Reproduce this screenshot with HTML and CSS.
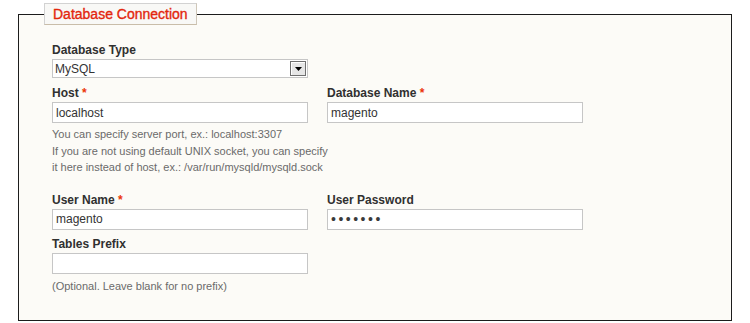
FILE: index.html
```html
<!DOCTYPE html>
<html>
<head>
<meta charset="utf-8">
<link rel="stylesheet" href="styles.css">
</head>
<body>
<div class="page">
  <fieldset class="box">
    <legend class="legend">Database Connection</legend>
    <div class="body">
      <div class="row">
        <div class="field">
          <label class="label">Database Type</label>
          <div class="select">
            <span class="select-text">MySQL</span>
            <span class="select-btn">
              <svg width="7" height="4" viewBox="0 0 7 4"><path d="M0 0H7L3.5 4Z" fill="#000"/></svg>
            </span>
          </div>
        </div>
      </div>
      <div class="row row-host">
        <div class="field">
          <label class="label">Host <span class="req">*</span></label>
          <input class="input" type="text" value="localhost">
          <p class="note">You can specify server port, ex.: localhost:3307<br>If you are not using default UNIX socket, you can specify<br>it here instead of host, ex.: /var/run/mysqld/mysqld.sock</p>
        </div>
        <div class="field">
          <label class="label">Database Name <span class="req">*</span></label>
          <input class="input" type="text" value="magento">
        </div>
      </div>
      <div class="row row-after-note">
        <div class="field">
          <label class="label">User Name <span class="req">*</span></label>
          <input class="input" type="text" value="magento">
        </div>
        <div class="field">
          <label class="label">User Password</label>
          <input class="input password" type="password" value="magento">
        </div>
      </div>
      <div class="row">
        <div class="field">
          <label class="label">Tables Prefix</label>
          <input class="input" type="text" value="">
          <p class="note note-last">(Optional. Leave blank for no prefix)</p>
        </div>
      </div>
    </div>
  </fieldset>
</div>
</body>
</html>
```

FILE: styles.css
```css
html, body {
  margin: 0;
  padding: 0;
  background: #ffffff;
}

.page {
  padding: 3px 0 0 18px;
  font-family: "Liberation Sans", Arial, sans-serif;
  color: #2f2f2f;
}

.box {
  box-sizing: border-box;
  width: 714px;
  height: 318px;
  margin: 0;
  padding: 0;
  border: 1px solid #1c1c1c;
  background: #fcfbf7;
  min-width: 0;
}

.legend {
  margin-left: 25px;
  padding: 0 8px;
  height: 22px;
  box-sizing: border-box;
  line-height: 20px;
  font-size: 14px;
  font-weight: normal;
  -webkit-text-stroke: 0.35px #e3260d;
  color: #e3260d;
  background: #f8f8f6;
  border: 1px solid #d2d2d2;
  border-bottom-color: #c9bda9;
  border-right-color: #cfc7b9;
}

.body {
  padding: 18px 0 0 33px;
}

.row {
  display: flex;
  gap: 19px;
  margin-top: 7px;
}

.row:first-child {
  margin-top: 0;
}

.row-host {
  margin-top: 8px;
}

.row-after-note {
  margin-top: 17px;
}

.field {
  width: 256px;
}

.label {
  display: block;
  font-size: 12px;
  line-height: 15px;
  font-weight: bold;
  color: #303030;
  margin-bottom: 1px;
}

.req {
  color: #eb340a;
  font-weight: bold;
}

.select {
  box-sizing: border-box;
  width: 256px;
  height: 19px;
  border: 1px solid #c6c6c6;
  background: #ffffff;
  display: flex;
  align-items: center;
}

.select-text {
  flex: 1;
  padding-left: 2px;
  font-size: 12px;
  color: #333;
}

.select-btn {
  box-sizing: border-box;
  width: 16px;
  height: 15px;
  margin-right: 1px;
  border: 1px solid #6f6f6f;
  background: #e6e6e6;
  box-shadow: inset 1px 1px 0 #ffffff;
  display: flex;
  align-items: center;
  justify-content: center;
}

.select-btn svg {
  display: block;
  margin-top: 1px;
}

.input {
  display: block;
  box-sizing: border-box;
  width: 256px;
  height: 21px;
  margin: 0;
  padding: 0 3px;
  border: 1px solid #c6c6c6;
  background: #ffffff;
  font-family: "Liberation Sans", Arial, sans-serif;
  font-size: 12px;
  color: #333;
  outline: none;
}

.password {
  letter-spacing: 2.5px;
  font-size: 14px;
  color: #3a3a3a;
}

.note {
  margin: 3px 0 0;
  font-size: 11px;
  line-height: 16.5px;
  color: #6a6a6a;
  white-space: nowrap;
}

.note-last {
  margin-top: 4px;
}
```
